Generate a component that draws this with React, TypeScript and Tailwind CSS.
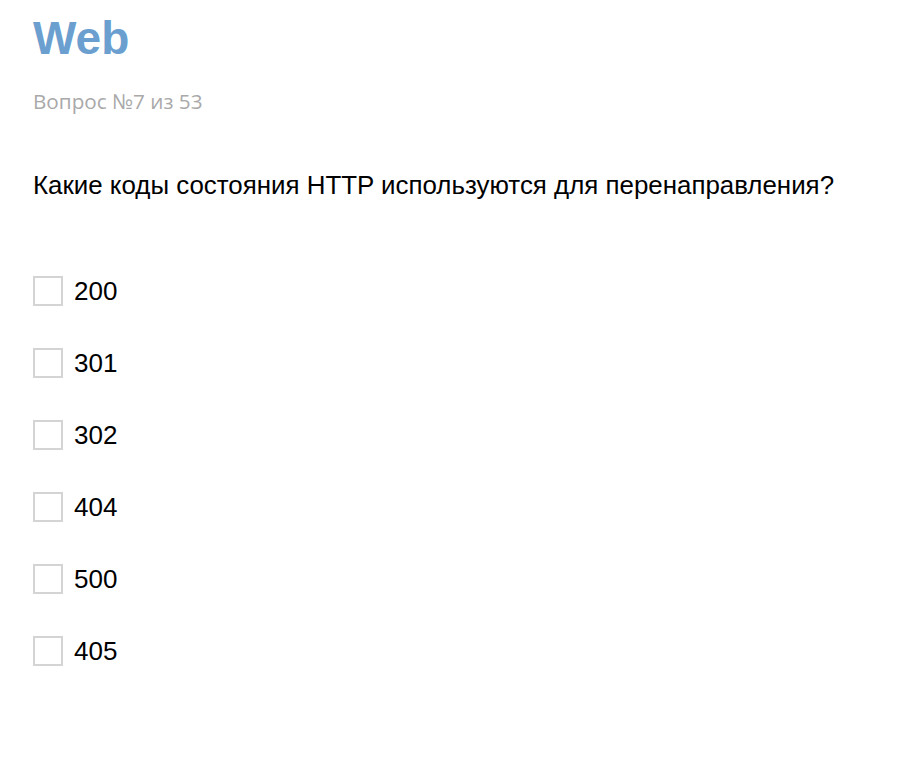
const options = ["200", "301", "302", "404", "500", "405"];

export default function App() {
  return (
    <div className="min-h-[762px] bg-white px-[33px] pt-[13px]">
      <h1 className="font-['Liberation_Sans',Arial,sans-serif] text-[46px] font-bold leading-[50px] text-[#6b9fcf]">
        Web
      </h1>
      <p className="mt-[26px] font-['Open_Sans',sans-serif] text-[20.7px] font-medium leading-[24px] text-[#a9a9a9]">
        Вопрос №7 из 53
      </p>
      <p className="mt-[57px] font-['Liberation_Sans',Arial,sans-serif] text-[25.9px] leading-[30px] text-black">
        Какие коды состояния HTTP используются для перенаправления?
      </p>

      <ul className="mt-[76px] flex flex-col gap-[42px]">
        {options.map((o) => (
          <li key={o} className="flex items-center gap-[11px]">
            <span className="h-[30px] w-[30px] shrink-0 border-2 border-[#d4d4d4] bg-white" />
            <span className="font-['Liberation_Sans',Arial,sans-serif] text-[26px] leading-[30px] text-black">
              {o}
            </span>
          </li>
        ))}
      </ul>
    </div>
  );
}
